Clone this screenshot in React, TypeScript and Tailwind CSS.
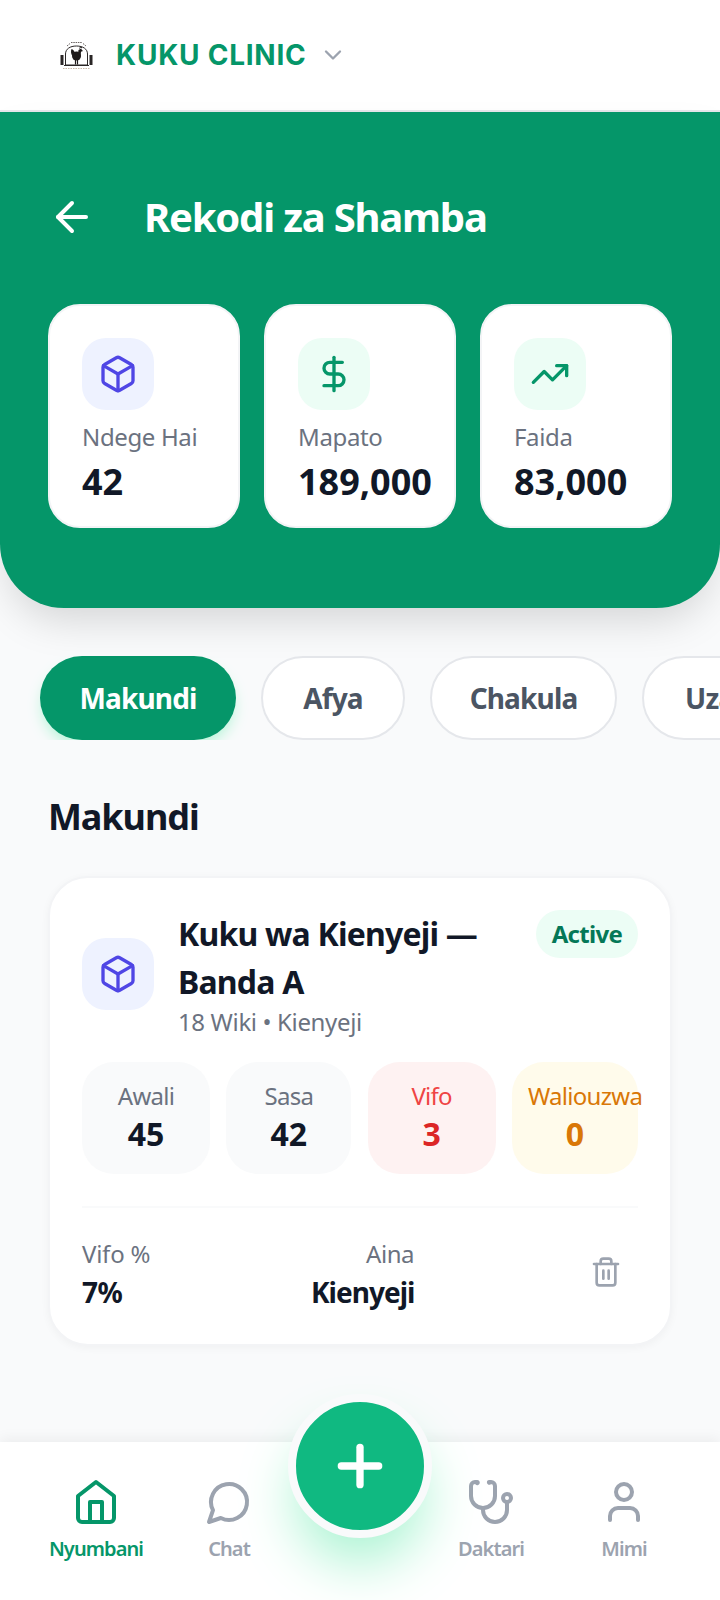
import { ArrowLeft, Box, ChevronDown, DollarSign, Plus, Trash2, TrendingUp, User } from "lucide-react";

const font = { fontFamily: '"Noto Sans", sans-serif' };

function Logo() {
  return (
    <svg width="33" height="29" viewBox="0 0 33 29" className="shrink-0">
      <path d="M5.500 24V13C5.500 8 10 5 16.500 5S27.500 8 27.500 13V24z" fill="none" stroke="#2a2626" strokeWidth="1" />
      <path d="M4 24.500h25" stroke="#2a2626" strokeWidth="1" />
      <rect x="0.500" y="14" width="3" height="10" fill="#2a2626" />
      <rect x="29.500" y="14" width="3" height="10" fill="#2a2626" />
      <ellipse cx="16.500" cy="15" rx="4.500" ry="4.500" fill="#1f1b1b" />
      <path d="M18 13l.5-4 2.500-1.500 1 1.500 1 1-2 .8-.5 5zM12.500 15c-1.500-2-2-4.500-1-7 1.500.5 3 2 4 5z" fill="#1f1b1b" />
      <path d="M19.500 7.500l1-1.500 1.500 1" stroke="#1f1b1b" strokeWidth="1" fill="none" />
      <path d="M15.500 19v4.500M17.500 19v4.500" stroke="#1f1b1b" strokeWidth="1.200" />
      <path d="M7 5l3-2.500M11 1.500h11M23 2.500l3 2.500" stroke="#6b6462" strokeWidth="1" strokeDasharray="1.500 .8" fill="none" />
      <path d="M3 27.500h27" stroke="#c9b9a8" strokeWidth="1" strokeDasharray="1.500 1" />
    </svg>
  );
}

function HomeIcon() {
  return (
    <svg width="48" height="48" viewBox="0 0 24 24" fill="none" stroke="#059669" strokeWidth="2" strokeLinecap="round" strokeLinejoin="round">
      <path d="m3 9 9-7 9 7v11a2 2 0 0 1-2 2H5a2 2 0 0 1-2-2z" />
      <polyline points="9 22 9 12 15 12 15 22" />
    </svg>
  );
}

function ChatIcon() {
  return (
    <svg width="48" height="48" viewBox="0 0 24 24" fill="none" stroke="#9ca3af" strokeWidth="2" strokeLinecap="round" strokeLinejoin="round">
      <path d="M7.900 20A9 9 0 1 0 4 16.100L2 22Z" />
    </svg>
  );
}

function StethoscopeIcon() {
  return (
    <svg width="48" height="48" viewBox="0 0 24 24" fill="none" stroke="#9ca3af" strokeWidth="2" strokeLinecap="round" strokeLinejoin="round">
      <path d="M4.800 2.300A.3.3 0 1 0 5 2H4a2 2 0 0 0-2 2v5a6 6 0 0 0 6 6 6 6 0 0 0 6-6V4a2 2 0 0 0-2-2h-1a.2.2 0 1 0 .3.3" />
      <path d="M8 15v1a6 6 0 0 0 6 6 6 6 0 0 0 6-6v-4" />
      <circle cx="20" cy="10" r="2" />
    </svg>
  );
}

function StatCard({ icon, tint, label, value }: { icon: React.ReactNode; tint: string; label: string; value: string }) {
  return (
    <div className="w-[192px] h-[224px] rounded-[32px] bg-white border-2 border-gray-100 pl-[32px] pt-[32px] shrink-0">
      <div className={`w-[72px] h-[72px] rounded-[24px] flex items-center justify-center ${tint}`}>{icon}</div>
      <div className="mt-[11px] text-[24px] leading-[32px] tracking-[-0.015em] text-[#6b7280]">{label}</div>
      <div className="mt-[5px] text-[36px] leading-[48px] font-bold text-[#111827] whitespace-nowrap">{value}</div>
    </div>
  );
}

function Tab({ label, width, active }: { label: string; width: string; active?: boolean }) {
  return (
    <div
      className={
        active
          ? `h-[84px] rounded-full bg-[#059669] text-white text-[28px] tracking-[-0.03em] font-bold flex items-center justify-center shrink-0 shadow-[0_8px_16px_-4px_#a7f3d0] ${width}`
          : `h-[84px] rounded-full bg-white border-2 border-gray-200 text-[#4b5563] text-[28px] tracking-[-0.03em] font-bold flex items-center justify-center shrink-0 ${width}`
      }
    >
      {label}
    </div>
  );
}

function Mini({ label, value, bg, labelColor, valueColor, width }: { label: string; value: string; bg: string; labelColor: string; valueColor: string; width: string }) {
  return (
    <div className={`h-[112px] rounded-[32px] px-[16px] pt-[16px] text-center shrink-0 ${bg} ${width}`}>
      <div className={`text-[24px] leading-[36px] tracking-[-0.03em] ${labelColor}`}>{label}</div>
      <div className={`text-[32px] leading-[40px] font-bold ${valueColor}`}>{value}</div>
    </div>
  );
}

function NavItem({ icon, label, color, width }: { icon: React.ReactNode; label: string; color: string; width: string }) {
  return (
    <div className={`flex flex-col items-center ${width}`}>
      <div className="h-[48px] flex items-center justify-center">{icon}</div>
      <div className={`mt-[9px] text-[20px] leading-[28px] tracking-[-0.045em] font-semibold ${color}`}>{label}</div>
    </div>
  );
}

export default function App() {
  return (
    <div style={font} className="relative w-[720px] h-[1600px] overflow-hidden bg-[#f9fafb] flex flex-col">
      {/* Top bar */}
      <header className="h-[112px] shrink-0 bg-white border-b-2 border-gray-200 flex items-center pl-[60px]">
        <Logo />
        <span style={{ fontFamily: "Inter, sans-serif" }} className="ml-[23px] text-[28px] tracking-[0.027em] font-bold text-[#059669]">
          KUKU CLINIC
        </span>
        <ChevronDown size={28} className="ml-[12px] text-[#9ca3af]" />
      </header>

      {/* Green hero */}
      <section className="h-[496px] shrink-0 bg-[#059669] rounded-b-[64px] shadow-[0_20px_40px_-8px_rgba(0,0,0,0.15)] px-[48px] relative z-10">
        <div className="h-[192px] pt-[18px] flex items-center">
          <ArrowLeft size={48} strokeWidth={2} className="text-white" />
          <h1 className="ml-[48px] text-[40px] tracking-[-0.03em] font-bold text-white">Rekodi za Shamba</h1>
        </div>
        <div className="flex gap-[24px]">
          <StatCard tint="bg-[#eef2ff]" label="Ndege Hai" value="42" icon={<Box size={40} className="text-[#4f46e5]" />} />
          <StatCard tint="bg-[#ecfdf5]" label="Mapato" value="189,000" icon={<DollarSign size={40} className="text-[#059669]" />} />
          <StatCard tint="bg-[#ecfdf5]" label="Faida" value="83,000" icon={<TrendingUp size={40} className="text-[#059669]" />} />
        </div>
      </section>

      {/* Tabs */}
      <div className="mt-[48px] pl-[40px] flex gap-[25px] overflow-hidden h-[84px] shrink-0">
        <Tab width="w-[196px]" label="Makundi" active />
        <Tab width="w-[144px]" label="Afya" />
        <Tab width="w-[187px]" label="Chakula" />
        <Tab width="w-[212px]" label="Uzalishaji" />
      </div>

      <main className="px-[48px] flex-1">
        <h2 className="mt-[49px] text-[36px] leading-[56px] tracking-[-0.03em] font-bold text-[#111827]">Makundi</h2>

        <div className="mt-[31px] bg-white rounded-[40px] border-2 border-gray-100 shadow-[0_2px_8px_rgba(0,0,0,0.04)] px-[32px] pt-[32px] pb-[32px] h-[470px]">
          <div className="flex items-center">
            <div className="w-[72px] h-[72px] rounded-[24px] bg-[#eef2ff] flex items-center justify-center shrink-0">
              <Box size={40} className="text-[#4f46e5]" />
            </div>
            <div className="ml-[24px] flex-1">
              <div className="text-[32px] leading-[48px] tracking-[-0.025em] font-bold text-[#111827] w-[320px]">Kuku wa Kienyeji — Banda A</div>
              <div className="text-[24px] leading-[32px] tracking-[-0.015em] text-[#6b7280]">18 Wiki • Kienyeji</div>
            </div>
            <div className="self-start h-[48px] px-[16px] rounded-full bg-[#ecfdf5] text-[#047857] text-[24px] tracking-[-0.03em] font-bold flex items-center">Active</div>
          </div>

          <div className="mt-[24px] flex justify-between">
            <Mini width="w-[128px]" label="Awali" value="45" bg="bg-[#f9fafb]" labelColor="text-[#6b7280]" valueColor="text-[#111827]" />
            <Mini width="w-[125px]" label="Sasa" value="42" bg="bg-[#f9fafb]" labelColor="text-[#6b7280]" valueColor="text-[#111827]" />
            <Mini width="w-[128px]" label="Vifo" value="3" bg="bg-[#fef2f2]" labelColor="text-[#ef4444]" valueColor="text-[#dc2626]" />
            <Mini width="w-[126px]" label="Waliouzwa" value="0" bg="bg-[#fffbeb]" labelColor="text-[#d97706]" valueColor="text-[#d97706]" />
          </div>

          <div className="mt-[32px] pt-[29px] border-t-2 border-gray-50 flex items-center">
            <div className="w-[229px]">
              <div className="text-[24px] leading-[34px] tracking-[-0.01em] text-[#6b7280]">Vifo %</div>
              <div className="text-[28px] leading-[42px] tracking-[-0.02em] font-bold text-[#111827]">7%</div>
            </div>
            <div className="w-[103px] text-right">
              <div className="text-[24px] leading-[34px] tracking-[-0.02em] text-[#6b7280]">Aina</div>
              <div className="text-[28px] leading-[42px] tracking-[-0.035em] font-bold text-[#111827] whitespace-nowrap">Kienyeji</div>
            </div>
            <Trash2 size={32} className="ml-auto mr-[16px] mb-[6px] text-[#9ca3af]" />
          </div>
        </div>
      </main>

      {/* Bottom nav */}
      <nav className="h-[158px] shrink-0 bg-white shadow-[0_-4px_12px_rgba(0,0,0,0.05)] relative flex items-start pt-[36px] pl-[46px]">
        <NavItem width="w-[100px]" icon={<HomeIcon />} label="Nyumbani" color="text-[#059669]" />
        <NavItem width="w-[90px] ml-[38px]" icon={<ChatIcon />} label="Chat" color="text-[#9ca3af]" />
        <NavItem width="w-[90px] ml-[172px]" icon={<StethoscopeIcon />} label="Daktari" color="text-[#9ca3af]" />
        <NavItem width="w-[90px] ml-[43px]" icon={<User size={48} className="text-[#9ca3af]" />} label="Mimi" color="text-[#9ca3af]" />
        <div className="absolute left-[288px] top-[-48px] w-[144px] h-[144px] rounded-full bg-[#10b981] border-[8px] border-[#f9fafb] flex items-center justify-center shadow-[0_32px_56px_-8px_#a7f3d0]">
          <Plus size={64} strokeWidth={2.750} className="text-white" />
        </div>
      </nav>
    </div>
  );
}
